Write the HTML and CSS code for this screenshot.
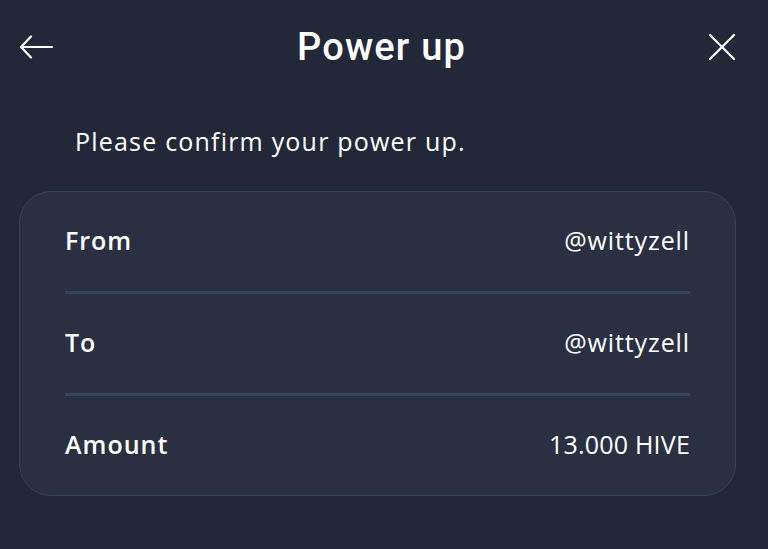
FILE: index.html
```html
<!doctype html>
<html lang="en">
<head>
  <meta charset="utf-8">
  <title>Power up</title>
  <link rel="stylesheet" href="styles.css">
</head>
<body>
  <div class="header">
    <button type="button" class="iconButton" aria-label="Back">
      <svg width="36" height="24" viewBox="0 0 36 24" fill="none" stroke="#fff" stroke-width="2.2" stroke-linecap="round" stroke-linejoin="round">
        <path d="M2 12 H33"/>
        <path d="M12 1.5 L2 12 L12 22.5"/>
      </svg>
    </button>
    <h1>Power up</h1>
    <button type="button" class="iconButton" aria-label="Close">
      <svg width="28" height="28" viewBox="0 0 28 28" fill="none" stroke="#fff" stroke-width="2.2" stroke-linecap="round">
        <path d="M2 2 L26 26"/>
        <path d="M26 2 L2 26"/>
      </svg>
    </button>
  </div>
  <p class="intro">Please confirm your power up.</p>
  <div class="summary">
    <div class="row">
      <span class="label">From</span>
      <span class="value">@wittyzell</span>
    </div>
    <div class="row">
      <span class="label">To</span>
      <span class="value">@wittyzell</span>
    </div>
    <div class="row">
      <span class="label">Amount</span>
      <span class="value amount">13.000 HIVE</span>
    </div>
  </div>
</body>
</html>
```

FILE: styles.css
```css
body {
  margin: 0;
  background-color: #222838;
  color: #fff;
  font-family: "Open Sans", sans-serif;
  padding: 0 32px 0 19px;
}
.header {
  display: flex;
  align-items: center;
  justify-content: space-between;
  height: 94px;
}
.header h1 {
  margin: 0;
  font-family: Roboto, sans-serif;
  font-weight: 500;
  font-size: 38px;
  letter-spacing: 1.2px;
}
.iconButton {
  background: none;
  border: none;
  padding: 0;
  display: flex;
  cursor: pointer;
}
.intro {
  margin: 30px 0 0 56px;
  font-size: 25px;
  letter-spacing: 1.2px;
  line-height: 34px;
}
.summary {
  margin-top: 33px;
  background-color: #2a3042;
  border: 1.5px solid #36425d;
  border-radius: 32px;
  padding: 0 45px;
}
.row {
  display: flex;
  justify-content: space-between;
  align-items: center;
  height: 99px;
  padding-bottom: 3px;
  box-sizing: border-box;
  font-size: 25px;
}
.row + .row {
  height: 102px;
  border-top: 3px solid #35435f;
}
.label {
  font-weight: 600;
  letter-spacing: 1px;
}
.value {
  font-weight: 500;
  letter-spacing: 0.9px;
}
.value.amount {
  letter-spacing: 0.2px;
}
```
